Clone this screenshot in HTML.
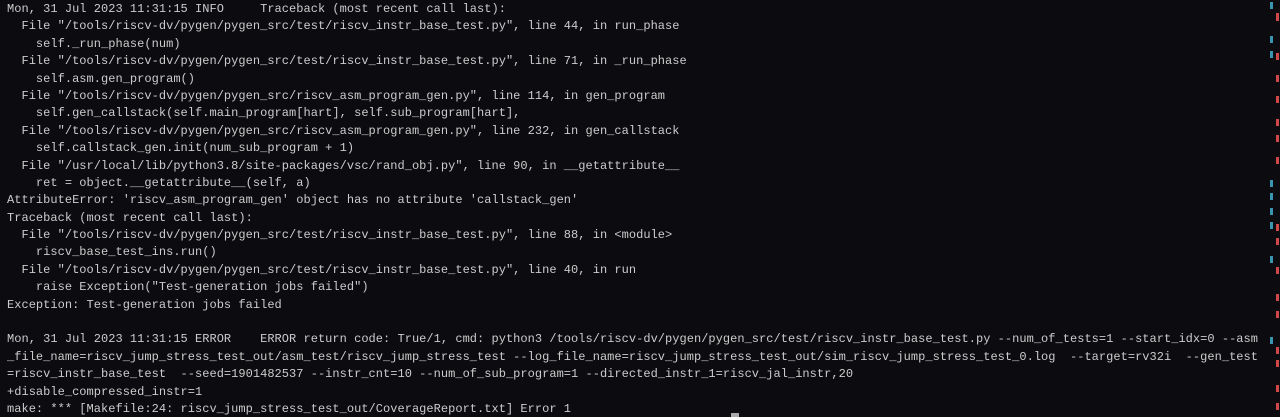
<!DOCTYPE html>
<html><head><meta charset="utf-8"><style>
html,body{margin:0;padding:0;background:#0c0c10;width:1280px;height:417px;overflow:hidden}
pre{margin:0;padding:1px 0 0 7px;font-family:"Liberation Mono",monospace;font-size:12px;letter-spacing:0.03px;line-height:17.39px;color:#cccccc;white-space:pre}
.m{position:absolute;width:3px;height:7px}
.b{left:1270px;background:#3a96b0}
.r{left:1276px;background:#d04848}
</style></head><body>
<pre>Mon, 31 Jul 2023 11:31:15 INFO     Traceback (most recent call last):
  File "/tools/riscv-dv/pygen/pygen_src/test/riscv_instr_base_test.py", line 44, in run_phase
    self._run_phase(num)
  File "/tools/riscv-dv/pygen/pygen_src/test/riscv_instr_base_test.py", line 71, in _run_phase
    self.asm.gen_program()
  File "/tools/riscv-dv/pygen/pygen_src/riscv_asm_program_gen.py", line 114, in gen_program
    self.gen_callstack(self.main_program[hart], self.sub_program[hart],
  File "/tools/riscv-dv/pygen/pygen_src/riscv_asm_program_gen.py", line 232, in gen_callstack
    self.callstack_gen.init(num_sub_program + 1)
  File "/usr/local/lib/python3.8/site-packages/vsc/rand_obj.py", line 90, in __getattribute__
    ret = object.__getattribute__(self, a)
AttributeError: 'riscv_asm_program_gen' object has no attribute 'callstack_gen'
Traceback (most recent call last):
  File "/tools/riscv-dv/pygen/pygen_src/test/riscv_instr_base_test.py", line 88, in &lt;module&gt;
    riscv_base_test_ins.run()
  File "/tools/riscv-dv/pygen/pygen_src/test/riscv_instr_base_test.py", line 40, in run
    raise Exception("Test-generation jobs failed")
Exception: Test-generation jobs failed

Mon, 31 Jul 2023 11:31:15 ERROR    ERROR return code: True/1, cmd: python3 /tools/riscv-dv/pygen/pygen_src/test/riscv_instr_base_test.py --num_of_tests=1 --start_idx=0 --asm
_file_name=riscv_jump_stress_test_out/asm_test/riscv_jump_stress_test --log_file_name=riscv_jump_stress_test_out/sim_riscv_jump_stress_test_0.log  --target=rv32i  --gen_test
=riscv_instr_base_test  --seed=1901482537 --instr_cnt=10 --num_of_sub_program=1 --directed_instr_1=riscv_jal_instr,20
+disable_compressed_instr=1
make: *** [Makefile:24: riscv_jump_stress_test_out/CoverageReport.txt] Error 1</pre>
<div class="m b" style="top:2px"></div><div class="m r" style="top:13px"></div>
<div class="m r" style="top:14px"></div><div class="m b" style="top:36px"></div>
<div class="m b" style="top:51px"></div><div class="m r" style="top:53px"></div>
<div class="m r" style="top:75px"></div><div class="m r" style="top:96px"></div>
<div class="m r" style="top:119px"></div><div class="m r" style="top:135px"></div>
<div class="m r" style="top:157px"></div><div class="m b" style="top:180px"></div>
<div class="m b" style="top:193px"></div><div class="m b" style="top:208px"></div>
<div class="m b" style="top:222px"></div><div class="m r" style="top:224px"></div>
<div class="m r" style="top:238px"></div><div class="m b" style="top:256px"></div>
<div class="m r" style="top:267px"></div><div class="m r" style="top:294px"></div>
<div class="m r" style="top:311px"></div>
<div class="m b" style="top:337px"></div><div class="m r" style="top:347px"></div>
<div class="m r" style="top:360px"></div><div class="m r" style="top:385px"></div>
<div class="m r" style="top:403px"></div>
<div style="position:absolute;left:731px;top:413px;width:8px;height:4px;background:#aaa"></div>
</body></html>
